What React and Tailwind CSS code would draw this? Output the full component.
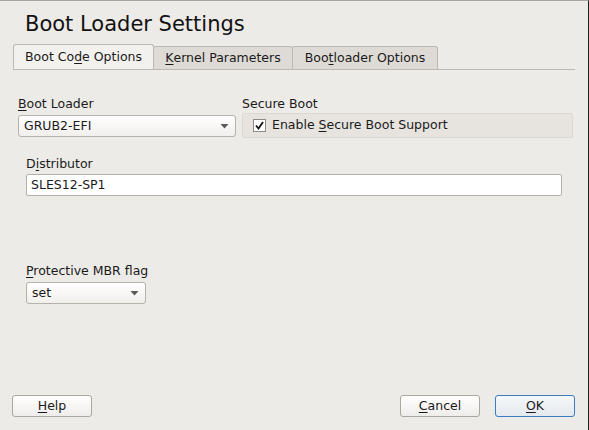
import React from "react";

const F = { fontFamily: '"DejaVu Sans", sans-serif' };

function U({ children }) {
  return <span className="underline underline-offset-[2px] decoration-[1px]">{children}</span>;
}

function Arrow() {
  return (
    <svg width="9" height="5" viewBox="0 0 9 5" className="shrink-0">
      <path d="M0.5 0 L8.5 0 L4.5 4.5 Z" fill="#5a5a5a" />
    </svg>
  );
}

function Combo({ value, className }) {
  return (
    <div
      className={
        "flex items-center justify-between h-[22px] pl-[5px] pr-[6px] rounded-[3px] border border-[#b5b1ab] bg-gradient-to-b from-[#ffffff] to-[#f1efec] text-[12.5px] text-[#1a1a1a] " +
        className
      }
    >
      <span>{value}</span>
      <Arrow />
    </div>
  );
}

function Tab({ children, active, className }) {
  return (
    <div
      className={
        "flex items-center justify-center border border-[#bdb9b3] rounded-t-[3px] text-[12.5px] text-[#1a1a1a] " +
        (active ? "bg-[#f3f1ee] h-[25px] border-b-0 " : "bg-[#dedbd6] h-[23px] border-b-0 ") +
        className
      }
    >
      {children}
    </div>
  );
}

function Button({ children, primary, className }) {
  return (
    <div
      className={
        "flex items-center justify-center w-[80px] h-[22px] rounded-[3px] border text-[12.5px] text-[#1a1a1a] " +
        (primary
          ? "border-[#3a7dc0] bg-gradient-to-b from-[#f6f8fa] to-[#e4e9ee] "
          : "border-[#aba79f] bg-gradient-to-b from-[#ffffff] to-[#efedea] ") +
        className
      }
    >
      {children}
    </div>
  );
}

export default function App() {
  return (
    <div
      style={F}
      className="w-[589px] h-[430px] bg-[#edebe7] border-t border-[#a8a6a2] border-r border-r-[#17251a] flex flex-col overflow-hidden"
    >
      <div className="pl-[25px] pt-[11px] text-[21px] leading-[24px] text-[#111]">Boot Loader Settings</div>

      <div className="ml-[13px] mt-[8px] w-[562px] flex items-end border-b border-[#bdb9b3]">
        <Tab active className="w-[141px]">
          Boot Co<U>d</U>e Options
        </Tab>
        <Tab className="w-[140px] -ml-px">
          <U>K</U>ernel Parameters
        </Tab>
        <Tab className="w-[146px] -ml-px">
          Boo<U>t</U>loader Options
        </Tab>
      </div>

      <div className="flex mt-[26px] ml-[18px]">
        <div className="flex flex-col w-[218px]">
          <div className="text-[12.5px] leading-[16px] text-[#1a1a1a]">
            <U>B</U>oot Loader
          </div>
          <Combo value="GRUB2-EFI" className="mt-[3px] w-[218px]" />
        </div>
        <div className="flex flex-col ml-[6px]">
          <div className="text-[12.5px] leading-[16px] text-[#1a1a1a]">Secure Boot</div>
          <div className="mt-[1px] w-[331px] h-[25px] rounded-[2px] border border-[#dcd8d2] bg-[#e7e4df] flex items-center pl-[10px]">
            <div className="w-[13px] h-[13px] bg-white border border-[#8e8a85] flex items-center justify-center">
              <svg width="9" height="9" viewBox="0 0 9 9">
                <path d="M1 4.5 L3.5 7.5 L8 1" stroke="#111" strokeWidth="1.8" fill="none" />
              </svg>
            </div>
            <span className="ml-[6px] text-[12.5px] text-[#1a1a1a]">
              Enable <U>S</U>ecure Boot Support
            </span>
          </div>
        </div>
      </div>

      <div className="ml-[26px] mt-[18px] text-[12.5px] leading-[16px] text-[#1a1a1a]">
        D<U>i</U>stributor
      </div>
      <div className="ml-[26px] mt-[2px] w-[536px] h-[22px] bg-white border border-[#b5b1ab] rounded-[2px] flex items-center pl-[4px] text-[12.5px] text-[#1a1a1a]">
        SLES12-SP1
      </div>

      <div className="ml-[26px] mt-[67px] text-[12.5px] leading-[16px] text-[#1a1a1a]">
        <U>P</U>rotective MBR flag
      </div>
      <Combo value="set" className="ml-[26px] mt-[3px] w-[120px]" />

      <div className="mt-auto mb-[13px] flex items-center px-[12px]">
        <Button>
          <U>H</U>elp
        </Button>
        <div className="flex-1" />
        <Button className="mr-[15px]">
          <U>C</U>ancel
        </Button>
        <Button primary className="mr-[1px]">
          <U>O</U>K
        </Button>
      </div>
    </div>
  );
}
